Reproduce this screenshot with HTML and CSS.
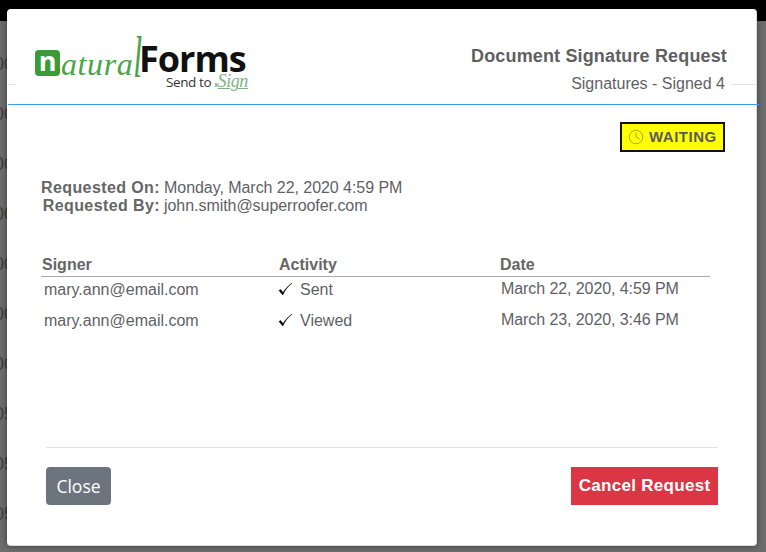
FILE: index.html
```html
<!DOCTYPE html>
<html lang="en">
<head>
<meta charset="utf-8">
<title>Document Signature Request</title>
<link rel="stylesheet" href="styles.css">
</head>
<body>
<div class="backdrop">
  <div class="topbar"></div>
  <div class="bg-rows">
    <div class="bg-row">00</div><div class="bg-row">00</div><div class="bg-row">00</div><div class="bg-row">00</div><div class="bg-row">00</div><div class="bg-row">00</div><div class="bg-row">00</div><div class="bg-row">05</div><div class="bg-row">05</div><div class="bg-row">05</div>
  </div>
</div>
<main class="modal">
  <header class="modal-header">
    <div class="rule rule-left"></div>
    <div class="rule rule-right"></div>
    <div class="logo">
      <div class="logo-top">
        <span class="logo-n">n</span><span class="logo-script">atura<span class="logo-l">l</span></span><span class="logo-forms">Forms</span>
      </div>
      <div class="logo-sub">Send to <span class="logo-x">x</span><span class="logo-sign">Sign</span></div>
    </div>
    <div class="titles">
      <h1 class="title">Document Signature Request</h1>
      <div class="subtitle">Signatures - Signed 4</div>
    </div>
  </header>
  <section class="modal-body">
    <div class="badge-row">
      <div class="badge">
        <svg class="clock" width="16" height="16" viewBox="0 0 16 16" aria-hidden="true"><circle cx="8" cy="8" r="6.8" fill="none" stroke="#a8a800" stroke-width="1"/><path d="M8 3.5V8L11.5 10" fill="none" stroke="#a8a800" stroke-width="1"/></svg>
        <span>WAITING</span>
      </div>
    </div>
    <dl class="meta">
      <dt>Requested On:</dt><dd>Monday, March 22, 2020 4:59 PM</dd>
      <dt>Requested By:</dt><dd>john.smith@superroofer.com</dd>
    </dl>
    <div class="signers">
      <div class="head">Signer</div><div class="head">Activity</div><div class="head">Date</div>
      <div class="cell email">mary.ann@email.com</div>
      <div class="cell activity"><svg class="check" width="15" height="15" viewBox="0 0 15 15" aria-hidden="true"><path d="M1 8.5L4.8 13C6.8 8.5 9.5 4.5 14 1.2C9.8 4 7 7.5 5 10.6L2.6 7.4Z" fill="#000" stroke="#000" stroke-width=".5"/></svg><span>Sent</span></div>
      <div class="cell date">March 22, 2020, 4:59 PM</div>
      <div class="cell email">mary.ann@email.com</div>
      <div class="cell activity"><svg class="check" width="15" height="15" viewBox="0 0 15 15" aria-hidden="true"><path d="M1 8.5L4.8 13C6.8 8.5 9.5 4.5 14 1.2C9.8 4 7 7.5 5 10.6L2.6 7.4Z" fill="#000" stroke="#000" stroke-width=".5"/></svg><span>Viewed</span></div>
      <div class="cell date">March 23, 2020, 3:46 PM</div>
    </div>
  </section>
  <footer class="modal-footer">
    <button class="btn btn-close" type="button">Close</button>
    <button class="btn btn-cancel" type="button">Cancel Request</button>
  </footer>
</main>
</body>
</html>
```
FILE: styles.css
```css
* { box-sizing: border-box; }
html, body { margin: 0; padding: 0; }
body {
  width: 766px;
  height: 552px;
  overflow: hidden;
  position: relative;
  background: #6c6c6c;
  font-family: "Liberation Sans", Arial, sans-serif;
  font-size: 16px;
  color: #5f5f66;
}
.backdrop { display: flex; flex-direction: column; height: 552px; }
.topbar { height: 21px; background: #000; flex: none; }
.bg-rows { padding-top: 18px; }
.bg-row {
  height: 50px;
  line-height: 50px;
  font-size: 18px;
  color: #3f3f3f;
  margin-left: -6px;
}
.modal {
  position: absolute;
  left: 7px;
  top: 9px;
  width: 750px;
  height: 537px;
  background: #fff;
  border-radius: 4px;
  border-right: 1px solid #dcdce4;
  border-bottom: 1px solid #dcdce4;
  box-shadow: 0 0 6px rgba(0,0,0,.45);
  display: flex;
  flex-direction: column;
}
.modal-header {
  position: relative;
  height: 96px;
  flex: none;
  margin-left: 1px;
  margin-right: -3px;
  border-bottom: 1px solid #3b99fc;
  display: flex;
  justify-content: space-between;
  padding: 26px 32px 0 27px;
}
.rule {
  position: absolute;
  top: 75px;
  height: 1px;
  background: #e3e3e3;
}
.rule-left { left: 0; width: 7px; }
.rule-right { left: 723px; width: 26px; }
.logo {
  position: relative;
  width: 220px;
  height: 58px;
  line-height: 1;
}
.logo-top { display: flex; align-items: flex-start; height: 40px; }
.logo-n {
  flex: none;
  width: 25px;
  height: 26px;
  margin-top: 15px;
  background: #389c37;
  border-radius: 4px;
  color: #fff;
  font-family: "Open Sans", sans-serif;
  font-weight: 700;
  font-size: 27px;
  line-height: 21px;
  text-align: center;
}
.logo-script {
  flex: none;
  width: 79px;
  padding-left: 1px;
  color: #4aa548;
  font-family: "Liberation Serif", serif;
  font-style: italic;
  font-size: 32px;
  line-height: 58px;
  letter-spacing: .6px;
  white-space: nowrap;
}
.logo-l {
  display: inline-block;
  transform: scaleY(1.85);
  transform-origin: 50% 65%;
}
.logo-forms {
  flex: none;
  color: #111;
  font-family: "Open Sans", sans-serif;
  font-weight: 700;
  font-size: 36px;
  line-height: 48px;
  letter-spacing: -1px;
}
.logo-sub {
  position: absolute;
  left: 131px;
  top: 37px;
  white-space: nowrap;
  font-family: "Open Sans", sans-serif;
  font-size: 13.5px;
  letter-spacing: -.4px;
  line-height: 18px;
  color: #333;
}
.logo-x { font-size: 7px; color: #666; }
.logo-sign {
  font-family: "Liberation Serif", serif;
  font-style: italic;
  font-size: 18px;
  color: #7fb283;
  text-decoration: underline;
  text-decoration-thickness: 1px;
  text-underline-offset: 1px;
}
.titles {
  height: 58px;
  text-align: right;
}
.title {
  margin: 11px 0 0;
  font-size: 18px;
  line-height: 20px;
  font-weight: 700;
  color: #5f5f5f;
  letter-spacing: .15px;
}
.subtitle { margin-top: 8px; margin-right: 2px; line-height: 20px; }
.modal-body { flex: 1; padding: 0 39px 0 34px; }
.badge-row { display: flex; justify-content: flex-end; padding-top: 17px; margin-right: -8px; }
.badge {
  width: 105px;
  height: 30px;
  background: #ff0;
  border: 2px solid #111;
  display: flex;
  align-items: center;
  gap: 5px;
  padding: 0 0 1px 6px;
  font-weight: 700;
  font-size: 15px;
  letter-spacing: .5px;
  color: #5a5a62;
}
.clock { flex: none; }
.meta {
  margin: 27px 0 0;
  display: grid;
  grid-template-columns: 119px 1fr;
  column-gap: 4px;
  line-height: 18px;
  letter-spacing: -.05px;
}
.meta dt { font-weight: 700; text-align: right; color: #666; letter-spacing: .4px; }
.meta dd { margin: 0; }
.signers {
  margin-top: 39px;
  width: 669px;
  display: grid;
  grid-template-columns: 237px 221px 211px;
}
.head {
  height: 23px;
  line-height: 20px;
  padding-left: 1px;
  font-weight: 700;
  color: #666;
  border-bottom: 1px solid #aaa;
  padding-top: 1px;
}
.cell { height: 31px; line-height: 18px; padding-top: 4px; }
.email { padding-left: 3px; }
.activity { display: flex; gap: 7px; align-items: flex-start; }
.check { flex: none; margin-top: 1px; }
.date { padding-left: 2px; padding-top: 3px; letter-spacing: -.08px; }
.modal-footer {
  flex: none;
  height: 98px;
  margin: 0 38px 0 39px;
  border-top: 1px solid #e2e2e2;
  padding-top: 19px;
  display: flex;
  justify-content: space-between;
  align-items: flex-start;
}
.btn { border: 0; height: 38px; color: #fff; padding: 0; }
.btn-close {
  width: 65px;
  background: #6c757d;
  border-radius: 4px;
  font-family: "Open Sans", sans-serif;
  font-size: 17.5px;
}
.btn-cancel {
  width: 147px;
  background: #dc3545;
  font-family: "Liberation Sans", Arial, sans-serif;
  font-weight: 700;
  font-size: 17px;
  letter-spacing: .3px;
}
```
